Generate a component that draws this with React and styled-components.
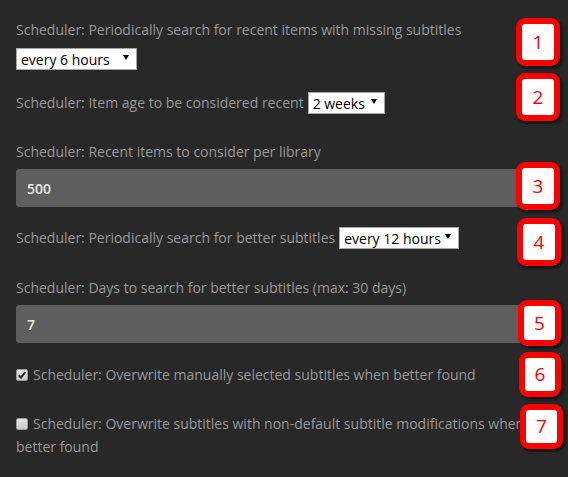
import React from 'react';
import styled, { createGlobalStyle } from 'styled-components';

const Global = createGlobalStyle`
  html, body { margin: 0; padding: 0; background: #282828; }
  body { font-family: "Open Sans", "DejaVu Sans", sans-serif; }
  * { box-sizing: border-box; }
`;

const Page = styled.div`
  position: relative;
  width: 568px;
  height: 477px;
  overflow: hidden;
  padding: 20px 16px 0;
  color: #999999;
  font-size: 14px;
  background: #282828;
`;

const Label = styled.div`
  line-height: 20px;
  margin-top: ${(p) => p.$mt || 0}px;
  white-space: nowrap;
`;

const InlineRow = styled.div`
  display: flex;
  align-items: center;
  gap: 4px;
  height: 22px;
  line-height: 20px;
  margin-top: ${(p) => p.$mt || 0}px;
  white-space: nowrap;
`;

const SelectBlock = styled.div`
  margin-top: ${(p) => p.$mt || 0}px;
  height: 22px;
`;

const SelectWrap = styled.span`
  position: relative;
  display: inline-block;
  height: 22px;
`;

const NativeSelect = styled.select`
  appearance: none;
  -webkit-appearance: none;
  width: ${(p) => p.$w}px;
  height: 22px;
  margin: 0;
  padding: 0 4px;
  border: 1px solid #a6a6a6;
  border-radius: 0;
  background: #ffffff;
  color: #000000;
  font-family: "Open Sans", "DejaVu Sans", sans-serif;
  font-size: 14px;
  outline: none;
`;

const Arrow = styled.span`
  position: absolute;
  right: 8px;
  top: 7px;
  width: 0;
  height: 0;
  border-left: 3px solid transparent;
  border-right: 3px solid transparent;
  border-top: 5px solid #000;
  pointer-events: none;
`;

const TextInput = styled.input`
  display: block;
  width: 100%;
  height: 38px;
  margin: ${(p) => p.$mt || 0}px 0 0;
  padding: 0 11px;
  border: none;
  border-radius: 3px;
  background: #5e5e5e;
  color: #e6e6e6;
  font-family: "Open Sans", "DejaVu Sans", sans-serif;
  font-size: 14px;
  font-weight: 600;
  outline: none;
`;

const CheckLine = styled.label`
  display: block;
  margin-top: ${(p) => p.$mt || 0}px;
  line-height: ${(p) => p.$lh || 20}px;
  padding-right: 12px;
`;

const Box = styled.span`
  display: inline-block;
  width: 12px;
  height: 12px;
  margin-right: 5px;
  vertical-align: -1px;
  border: 1px solid #9a9a9a;
  border-radius: 2px;
  background: linear-gradient(#e6e6e6, #c8c8c8);
  position: relative;
  svg { position: absolute; left: 0; top: 0; }
`;

const Badge = styled.div`
  position: absolute;
  left: ${(p) => p.$x}px;
  top: ${(p) => p.$y}px;
  width: ${(p) => p.$w}px;
  height: ${(p) => p.$h}px;
  border: 6px solid #ff0000;
  border-radius: 9px;
  background: #ffffff;
  box-shadow: 2px 2px 3px rgba(0, 0, 0, 0.75);
  display: flex;
  align-items: center;
  justify-content: center;
  color: #ff0000;
  font-family: "Open Sans", "DejaVu Sans", sans-serif;
  font-size: 19px;
  line-height: 1;
`;

const Select = ({ w, value }) => (
  <SelectWrap>
    <NativeSelect $w={w} defaultValue={value}>
      <option value={value}>{value}</option>
    </NativeSelect>
    <Arrow />
  </SelectWrap>
);

const Check = ({ checked }) => (
  <Box>
    {checked && (
      <svg width="10" height="10" viewBox="0 0 10 10">
        <path d="M1.8 5.2 L4 7.6 L8.4 2" fill="none" stroke="#2a2a2a" strokeWidth="2" />
      </svg>
    )}
  </Box>
);

const badges = [
  { n: 1, x: 516, y: 18, w: 44, h: 48 },
  { n: 2, x: 516, y: 73, w: 44, h: 48 },
  { n: 3, x: 516, y: 162, w: 44, h: 48 },
  { n: 4, x: 517, y: 218, w: 44, h: 48 },
  { n: 5, x: 518, y: 300, w: 43, h: 46 },
  { n: 6, x: 519, y: 352, w: 42, h: 45 },
  { n: 7, x: 520, y: 404, w: 43, h: 45 },
];

export default function App() {
  return (
    <>
      <Global />
      <Page>
        <Label>Scheduler: Periodically search for recent items with missing subtitles</Label>
        <SelectBlock $mt={8}>
          <Select w={121} value="every 6 hours" />
        </SelectBlock>
        <InlineRow $mt={22}>
          <span>Scheduler: Item age to be considered recent</span>
          <Select w={77} value="2 weeks" />
        </InlineRow>
        <Label $mt={28}>Scheduler: Recent items to consider per library</Label>
        <TextInput $mt={7} defaultValue="500" />
        <InlineRow $mt={20}>
          <span>Scheduler: Periodically search for better subtitles</span>
          <Select w={120} value="every 12 hours" />
        </InlineRow>
        <Label $mt={29}>Scheduler: Days to search for better subtitles (max: 30 days)</Label>
        <TextInput $mt={7} defaultValue="7" />
        <CheckLine $mt={22}>
          <Check checked />
          Scheduler: Overwrite manually selected subtitles when better found
        </CheckLine>
        <CheckLine $mt={27} $lh={23}>
          <Check />
          Scheduler: Overwrite subtitles with non-default subtitle modifications when better found
        </CheckLine>
        {badges.map((b) => (
          <Badge key={b.n} $x={b.x} $y={b.y} $w={b.w} $h={b.h}>
            {b.n}
          </Badge>
        ))}
      </Page>
    </>
  );
}
